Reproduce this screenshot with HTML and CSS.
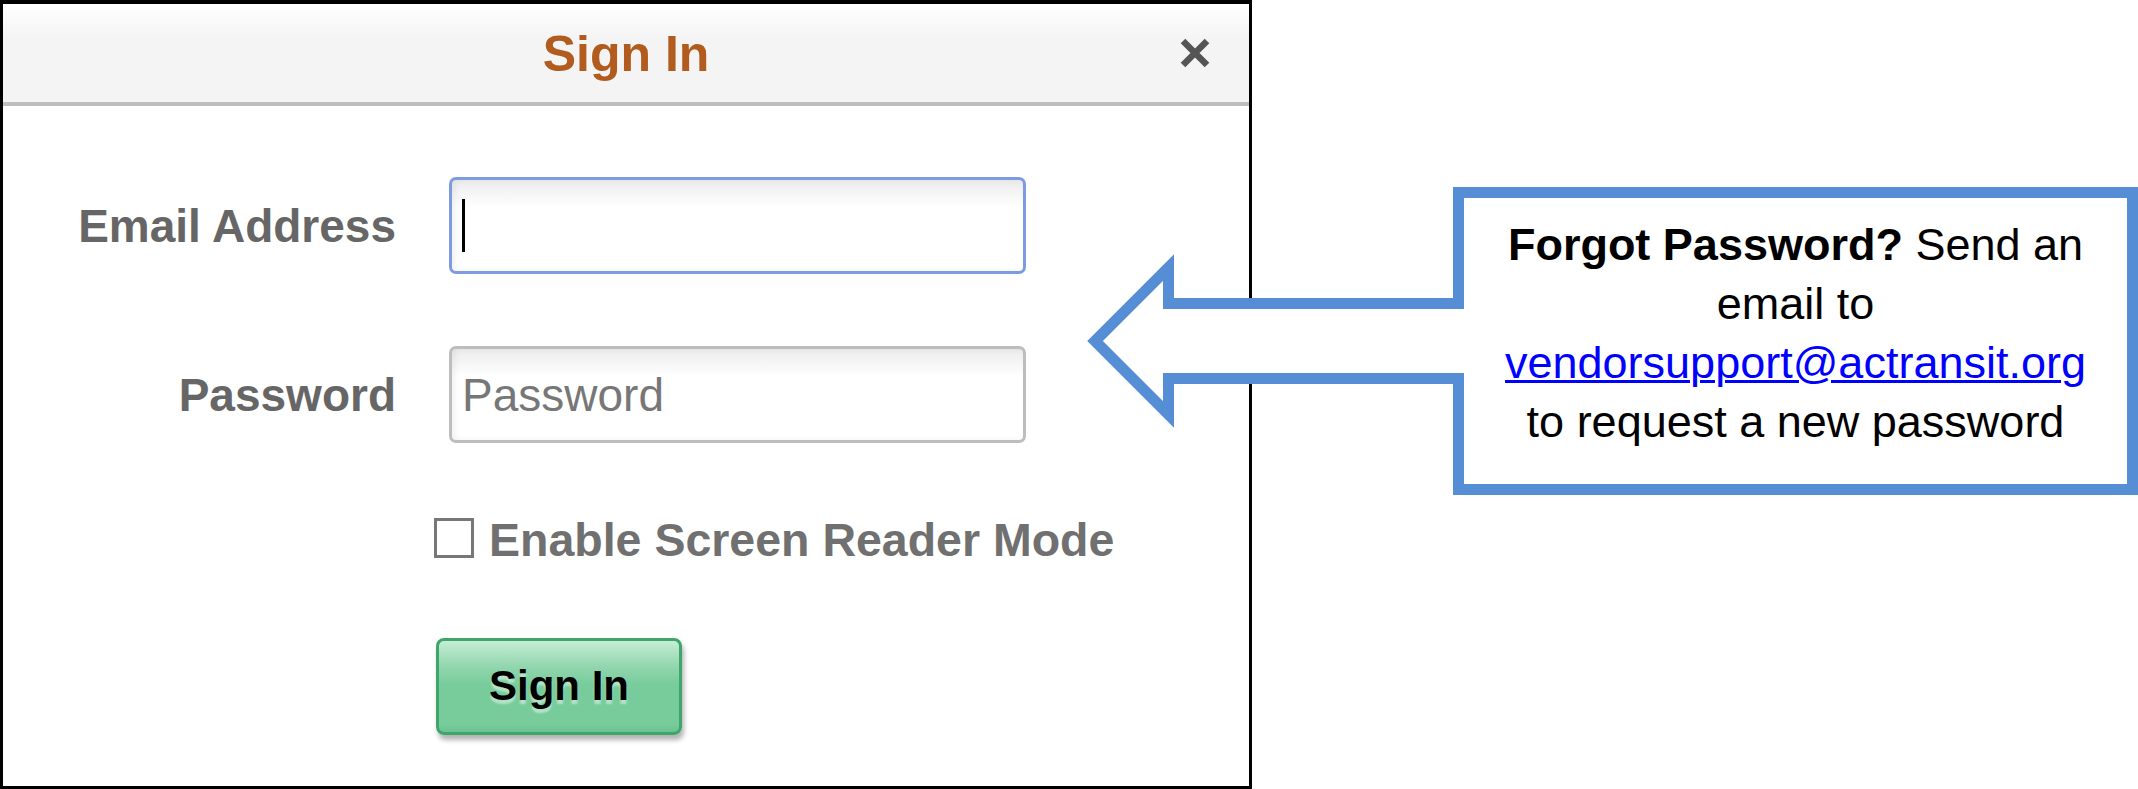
FILE: index.html
```html
<!DOCTYPE html>
<html lang="en">
<head>
  <meta charset="UTF-8">
  <meta name="viewport" content="width=device-width, initial-scale=1.0">
  <title>Sign In</title>
  <link rel="stylesheet" href="styles.css">
</head>
<body>
  <div class="signin-dialog">
    <div class="dialog-header">
      <span></span>
      <h1 class="dialog-title">Sign In</h1>
      <button type="button" class="close-btn" aria-label="Close">
        <svg width="34" height="34" viewBox="0 0 34 34">
          <path d="M5 5 L29 29 M29 5 L5 29" stroke="#555" stroke-width="6.5" fill="none"/>
        </svg>
      </button>
    </div>
    <form class="signin-form" id="signinForm">
      <div class="form-row">
        <label for="email">Email Address</label>
        <div class="input-wrap">
          <input type="email" id="email" class="is-focused">
          <span class="caret"></span>
        </div>
      </div>
      <div class="form-row">
        <label for="password">Password</label>
        <div class="input-wrap">
          <input type="password" id="password" placeholder="Password">
        </div>
      </div>
      <label class="reader-mode"><span class="check-box"></span>Enable Screen Reader Mode</label>
      <button type="submit" class="signin-btn">Sign In</button>
    </form>
  </div>

  <!-- annotation over the screenshot -->
  <div class="callout">
    <svg class="callout-shape" width="1058" height="320" viewBox="1080 180 1058 320">
      <path d="M1458.5 303.5 L1458.5 192.5 L2132.5 192.5 L2132.5 489.5 L1458.5 489.5 L1458.5 378.5 L1168.5 378.5 L1168.5 414.5 L1095 341 L1168.5 267.5 L1168.5 303.5 Z"
            fill="#fff" stroke="#558ed5" stroke-width="11"/>
    </svg>
    <p class="callout-text">
      <strong>Forgot Password?</strong> Send an<br>
      email to<br>
      <a href="mailto:vendorsupport@actransit.org">vendorsupport@actransit.org</a><br>
      to request a new password
    </p>
  </div>
</body>
</html>
```

FILE: styles.css
```css
body {
  margin: 0;
  font-family: "Liberation Sans", Arial, sans-serif;
  background: #fff;
  width: 2138px;
  height: 789px;
  position: relative;
  overflow: hidden;
}
.signin-dialog {
  width: 1252px;
  height: 789px;
  box-sizing: border-box;
  border: 3px solid #000;
  border-top-width: 4px;
  background: #fff;
}
.dialog-header {
  display: grid;
  grid-template-columns: 1fr auto 1fr;
  align-items: center;
  height: 98px;
  background: linear-gradient(#fff 0%, #f4f4f4 35%, #f4f4f4 100%);
  border-bottom: 4px solid #bfbfbf;
}
.dialog-title {
  margin: 0;
  font-size: 50px;
  font-weight: bold;
  color: #b15c1e;
  padding-top: 2px;
}
.close-btn {
  justify-self: end;
  margin-right: 37px;
  padding: 0;
  border: none;
  background: none;
  display: flex;
}
.signin-form {
  padding-top: 71px;
}
.form-row {
  display: flex;
  align-items: center;
  gap: 53px;
}
.form-row + .form-row {
  margin-top: 72px;
}
.form-row label {
  width: 393px;
  flex-shrink: 0;
  text-align: right;
  font-size: 46px;
  font-weight: bold;
  color: #666;
}
.input-wrap {
  position: relative;
}
.input-wrap input {
  display: block;
  width: 577px;
  height: 97px;
  box-sizing: border-box;
  border: 3px solid #bdbdbd;
  border-radius: 7px;
  padding: 0 10px;
  font-family: inherit;
  font-size: 46px;
  color: #333;
  background: linear-gradient(#ececec 0%, #fff 30%);
  box-shadow: inset 3px 0 6px rgba(0, 0, 0, 0.06);
  outline: none;
}
.input-wrap input::placeholder {
  color: #777;
}
.input-wrap input.is-focused {
  border-color: #7f9be0;
}
.caret {
  position: absolute;
  left: 13px;
  top: 22px;
  width: 3px;
  height: 53px;
  background: #000;
}
.reader-mode {
  display: flex;
  align-items: center;
  gap: 15px;
  margin: 74px 0 0 431px;
  font-size: 46.5px;
  line-height: 1;
  font-weight: bold;
  color: #707070;
}
.check-box {
  width: 40px;
  height: 40px;
  box-sizing: border-box;
  border: 3px solid #777;
  background: #fff;
  margin-top: -4px;
}
.signin-btn {
  display: block;
  width: 246px;
  height: 97px;
  margin: 74px 0 0 433px;
  border: 3px solid #3ea66b;
  border-radius: 8px;
  background: linear-gradient(#c6edd6 0%, #92d6ae 28%, #78cc9c 48%, #78cc9c 92%, #6cc292 100%);
  box-shadow: 2px 5px 5px rgba(0, 0, 0, 0.3);
  font-family: inherit;
  font-size: 42px;
  font-weight: bold;
  color: #000;
  text-shadow: 0 4px 2px rgba(255, 255, 255, 0.45);
  cursor: pointer;
}
.callout {
  position: absolute;
  left: 1080px;
  top: 180px;
  width: 1058px;
  height: 320px;
}
.callout-shape {
  display: block;
}
.callout-text {
  position: absolute;
  left: 373px;
  top: 7px;
  width: 685px;
  height: 308px;
  box-sizing: border-box;
  margin: 0;
  padding: 28px 11px 0;
  text-align: center;
  font-size: 45px;
  line-height: 59px;
  color: #000;
}
.callout-text a {
  color: #0000ff;
  text-decoration-thickness: 3px;
}
```
